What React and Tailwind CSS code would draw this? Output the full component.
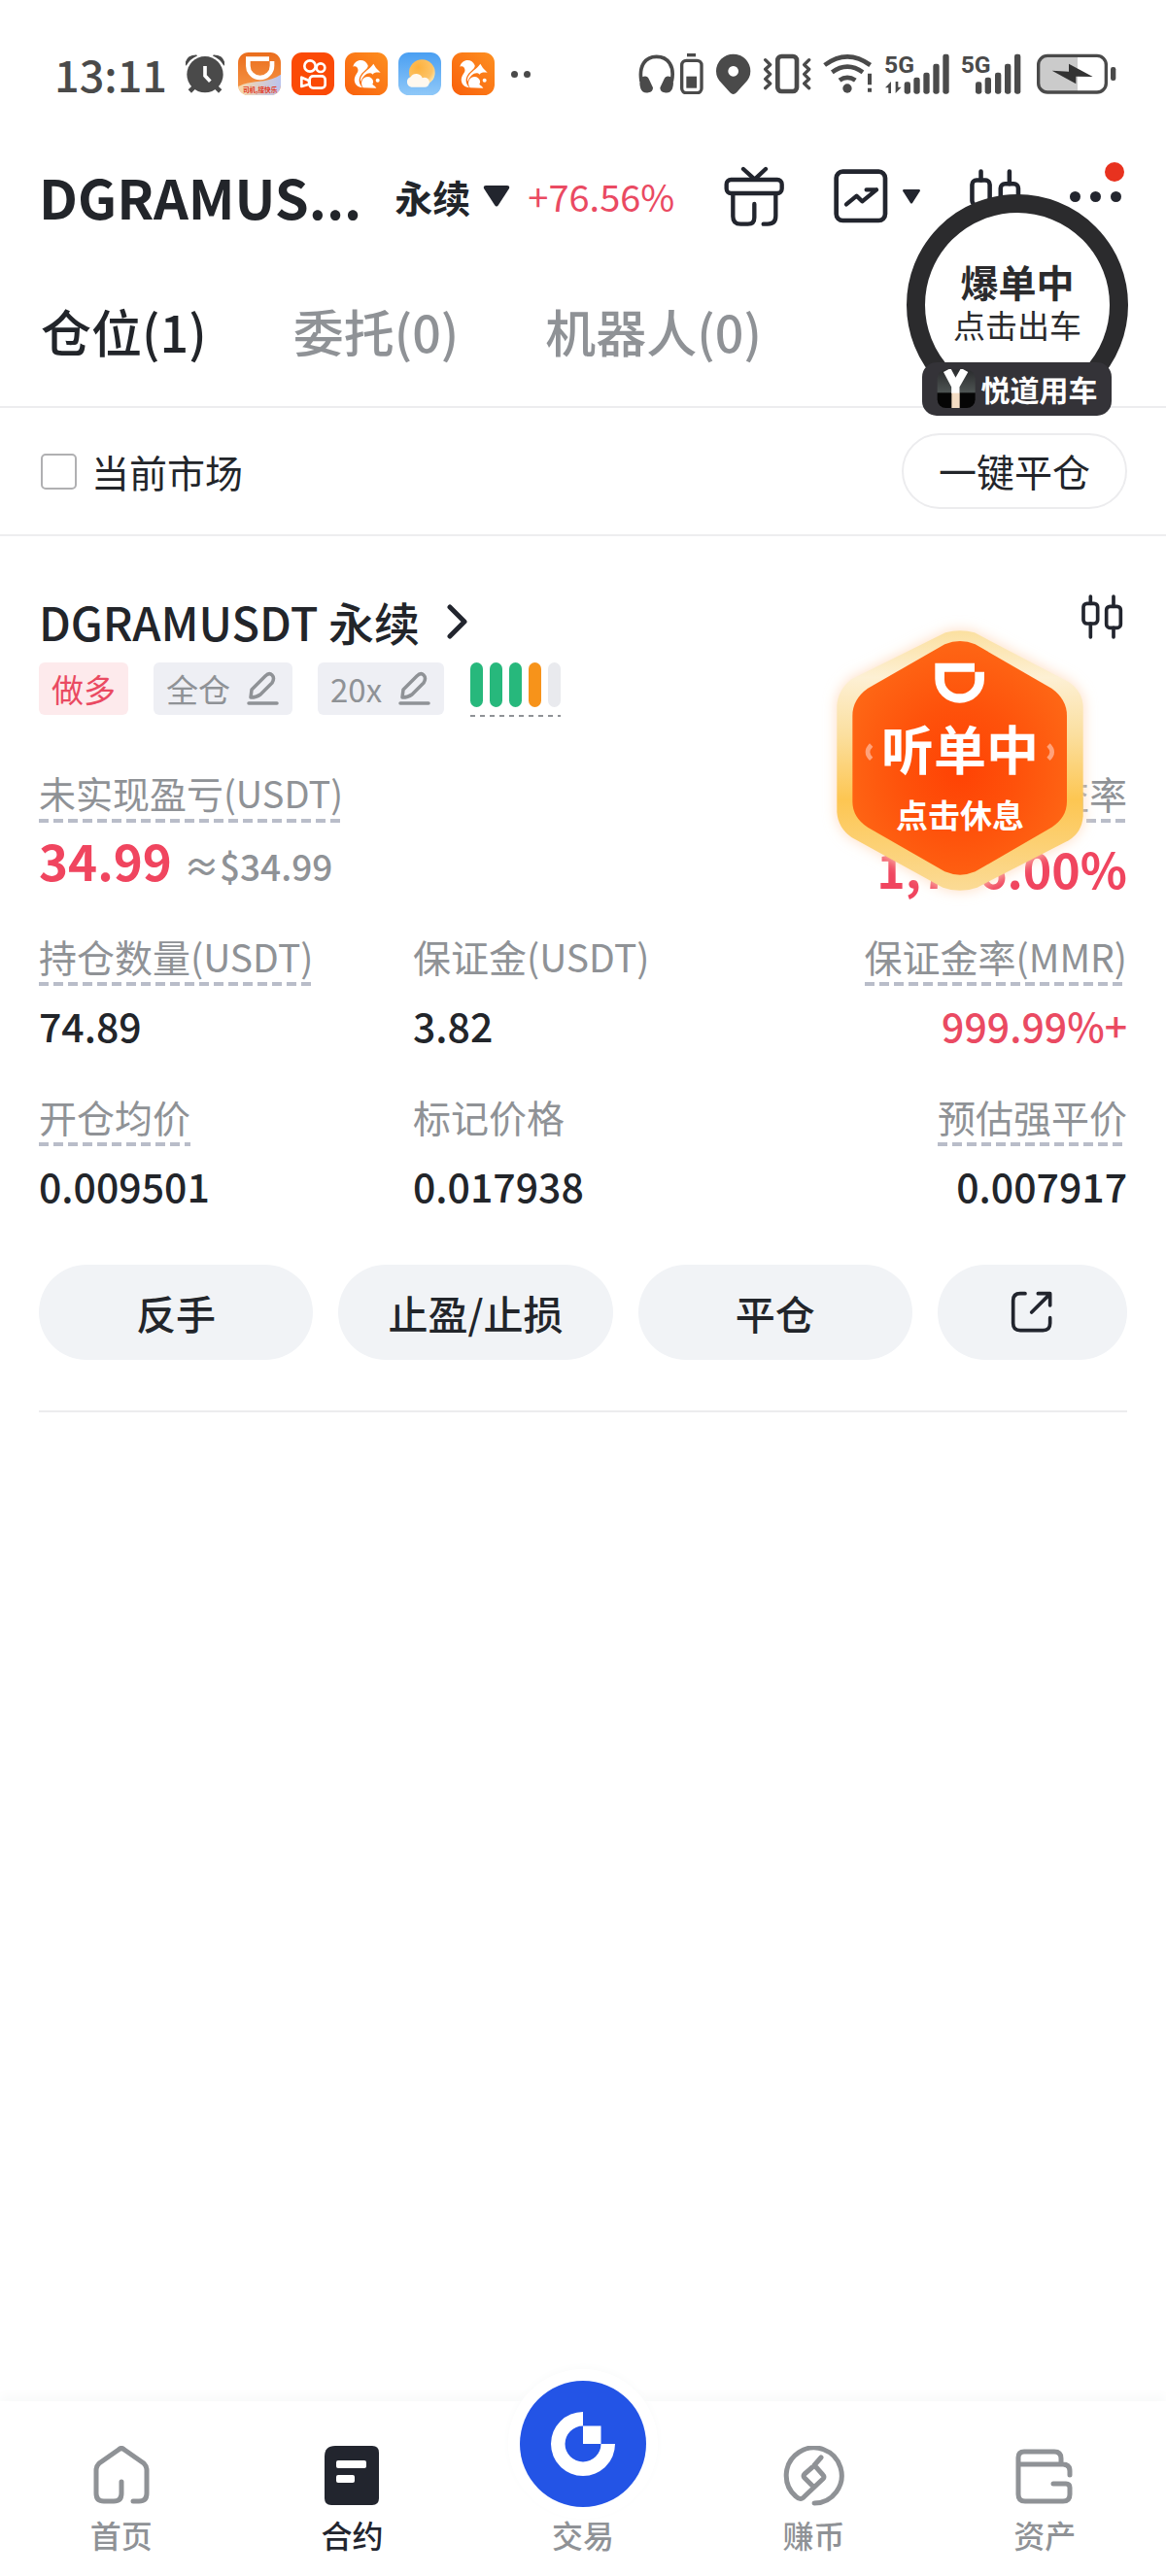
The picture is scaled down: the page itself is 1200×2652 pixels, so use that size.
import { useState } from 'react';

const stats = [
  { label: '持仓数量(USDT)', value: '74.89', hint: true },
  { label: '保证金(USDT)', value: '3.82' },
  { label: '保证金率(MMR)', value: '999.99%+', hint: true, right: true, red: true },
  { label: '开仓均价', value: '0.009501', hint: true },
  { label: '标记价格', value: '0.017938' },
  { label: '预估强平价', value: '0.007917', hint: true, right: true },
];

const tabs = ['仓位(1)', '委托(0)', '机器人(0)'];

/* ---------- status bar icons ---------- */

function AlarmIcon() {
  return (
    <svg className="w-[40px] h-[40px]" viewBox="455 50 120 120" fill="#4a4a4a">
      <circle cx="515" cy="112" r="56" />
      <path d="M456 82 q2-28 32-28 q-20 8-32 28z M574 82 q-2-28-32-28 q20 8 32 28z" stroke="#4a4a4a" strokeWidth="5" strokeLinejoin="round" />
      <path d="M482 150 l-14 14 M548 150 l14 14" stroke="#4a4a4a" strokeWidth="14" />
      <path d="M515 86 v30 l16 17" fill="none" stroke="#fff" strokeWidth="11" />
    </svg>
  );
}

function DidiAppIcon() {
  return (
    <svg className="w-[44px] h-[44px]" viewBox="0 0 132 132">
      <defs>
        <linearGradient id="didiBg" x1="0" y1="0" x2="0" y2="1">
          <stop offset="0" stopColor="#ea6d1c" />
          <stop offset="1" stopColor="#f79a4c" />
        </linearGradient>
        <linearGradient id="didiWave" x1="0" y1="0" x2="1" y2="0">
          <stop offset="0" stopColor="#fbd9a8" />
          <stop offset="1" stopColor="#b9c3ee" />
        </linearGradient>
        <clipPath id="didiClip"><rect width="132" height="132" rx="32" /></clipPath>
      </defs>
      <g clipPath="url(#didiClip)">
        <rect width="132" height="132" fill="url(#didiBg)" />
        <path d="M0 106 C40 82 90 98 132 68 V132 H0z" fill="url(#didiWave)" />
        <path d="M24 13 h72 v14 h16 v14 a44 44 0 0 1 -88 0z M38 27 v14 a30 30 0 0 0 60 0 v-14z" fill="#fff" fillRule="evenodd" />
        <text x="68" y="123" textAnchor="middle" fontSize="20" fontWeight="700" fill="#e33a22">司机,接快乐</text>
      </g>
    </svg>
  );
}

function KuaishouIcon() {
  return (
    <svg className="w-[44px] h-[44px]" viewBox="0 0 132 132">
      <rect width="132" height="132" rx="32" fill="#fb4a06" />
      <g fill="none" stroke="#fff" strokeWidth="8" strokeLinejoin="round">
        <circle cx="57" cy="42" r="17" />
        <circle cx="90" cy="47" r="13" />
        <rect x="56" y="73" width="48" height="37" rx="11" />
        <path d="M31 77 L54 87 V98 L31 105z" />
      </g>
    </svg>
  );
}

function SquirrelIcon({ id }) {
  return (
    <svg className="w-[44px] h-[44px]" viewBox="0 0 132 132">
      <defs>
        <linearGradient id={id} x1="1" y1="0" x2="0" y2="1">
          <stop offset="0" stopColor="#fd8f20" />
          <stop offset="1" stopColor="#f9600c" />
        </linearGradient>
      </defs>
      <rect width="132" height="132" rx="32" fill={`url(#${id})`} />
      <path d="M25 44 C30 20 62 16 71 40 C73 50 58 56 49 70 C40 84 44 98 54 109 C34 107 24 90 32 73 C37 63 42 60 40 52 C38 43 32 41 25 44z" fill="#fff" />
      <path d="M52 72 C60 58 76 52 88 35 L96 48 L110 62 C98 61 90 61 86 68 C80 62 70 62 62 70 C56 76 52 82 49 90 C47 84 48 78 52 72z" fill="#fff" />
      <path d="M56 109 C50 100 50 92 54 84 C62 70 84 72 87 88 C88 94 86 96 85 98 C89 102 94 104 97 110z" fill="#fff" />
      <circle cx="101" cy="86" r="6" fill="#fff" />
    </svg>
  );
}

function WeatherIcon() {
  return (
    <svg className="w-[44px] h-[44px]" viewBox="0 0 132 132">
      <defs>
        <linearGradient id="sky" x1="0" y1="0" x2="0" y2="1">
          <stop offset="0" stopColor="#4a9ff2" />
          <stop offset="1" stopColor="#8fc8f8" />
        </linearGradient>
        <radialGradient id="sun" cx=".35" cy=".3" r=".8">
          <stop offset="0" stopColor="#fdb13c" />
          <stop offset=".7" stopColor="#fcc468" />
          <stop offset="1" stopColor="#fff0c2" />
        </radialGradient>
      </defs>
      <rect width="132" height="132" rx="32" fill="url(#sky)" />
      <circle cx="73" cy="62" r="40" fill="url(#sun)" />
      <path d="M40 107 a16 16 0 0 1 -2-31 a20 20 0 0 1 36 3 a15 15 0 1 1 4 28z" fill="#fff8ee" />
    </svg>
  );
}

function Signal({ data }) {
  return (
    <svg className={data ? 'w-[67px] h-[42px] ml-3 overflow-visible' : 'w-[62px] h-[42px] ml-3 overflow-visible'} viewBox={data ? '810 46 201 126' : '1048 46 186 126'} fill="#4a4a4a">
      <text x={data ? 810 : 1047} y="107" fontSize="74" fontWeight="700" fontFamily="Roboto, sans-serif">5G</text>
      {data && <path d="M813 152 l18-19 v36 h-8 v-17z M863 150 l-18 19 v-36 h8 v17z" />}
      {(data ? [872, 901, 931, 961, 991] : [1093, 1122, 1153, 1183, 1213]).map((x, i) => (
        <rect key={x} x={x} y={[134, 120, 105, 78, 48][i]} width="19" height={[37, 51, 66, 93, 123][i]} rx="7" />
      ))}
    </svg>
  );
}

function StatusBar() {
  return (
    <div className="h-[152px] pl-14 pr-[51px] flex items-center justify-between text-[#4a4a4a]">
      <div className="flex items-center gap-[11px]">
        <span className="text-[45px] leading-[50px] font-medium mr-2">13:11</span>
        <AlarmIcon />
        <span className="ml-[3px]"><DidiAppIcon /></span>
        <KuaishouIcon />
        <SquirrelIcon id="sq1" />
        <WeatherIcon />
        <SquirrelIcon id="sq2" />
        <span className="flex gap-[6px] ml-[6px]">
          <i className="size-[7px] rounded-full bg-[#4a4a4a]" />
          <i className="size-[7px] rounded-full bg-[#4a4a4a]" />
        </span>
      </div>
      <div className="flex items-center">
        <svg className="w-[68px] h-[42px]" viewBox="45 46 204 126" fill="none" stroke="#4a4a4a">
          <path d="M54 132 C46 84 66 56 101 56 C136 56 158 84 148 132" strokeWidth="11" />
          <path d="M58 118 q14-6 20 8 l12 26 q0 14-14 15 q-18 3-24-12 q-8-26 6-37z M144 118 q-14-6-20 8 l-12 26 q0 14 14 15 q18 3 24-12 q8-26-6-37z" fill="#4a4a4a" stroke="none" />
          <rect x="179" y="68" width="61" height="100" rx="14" strokeWidth="10" />
          <path d="M195 51 h27" strokeWidth="10" />
          <rect x="193" y="117" width="32" height="36" fill="#4a4a4a" stroke="none" />
        </svg>
        <svg className="w-[36px] h-[42px] ml-3" viewBox="286 46 108 126" fill="#4a4a4a">
          <path d="M339 48 a53 53 0 0 1 53 53 q0 22-18 38 l-25 28 q-10 10-20 0 l-25-28 q-18-16-18-38 a53 53 0 0 1 53-53z M339 85 a16 16 0 1 0 .1 0z" fillRule="evenodd" />
        </svg>
        <svg className="w-[50px] h-[42px] ml-3" viewBox="430 46 150 126" fill="none" stroke="#4a4a4a" strokeLinejoin="round" strokeLinecap="round">
          <rect x="476" y="55" width="59" height="108" rx="12" strokeWidth="14" />
          <path d="M438 66 l15 15 l-15 14 l15 15 l-15 15 l15 14 l-15 14 M573 66 l-15 15 l15 14 l-15 15 l15 15 l-15 14 l15 14" strokeWidth="10" />
        </svg>
        <svg className="w-[51px] h-[42px] ml-3" viewBox="622 46 153 126" fill="none" stroke="#4a4a4a" strokeWidth="14">
          <path d="M627 82 Q697 30 768 82 M650 104 Q697 70 745 104 M673 129 Q697 112 722 129" />
          <circle cx="697" cy="154" r="14" fill="#4a4a4a" stroke="none" />
          <path d="M766 108 v35 M766 153 v12" strokeWidth="12" />
        </svg>
        <Signal data />
        <Signal />
        <svg className="w-[82px] h-[42px] ml-4" viewBox="1281 46 246 126">
          <path d="M1310 54 H1407 V166 H1310 q-24 0-24-24 V78 q0-24 24-24z" fill="#cbcbcb" />
          <rect x="1286" y="53" width="209" height="113" rx="28" fill="none" stroke="#4a4a4a" strokeWidth="10" />
          <path d="M1328 99 L1380 102 V78 L1454 118 L1402 117 V140z" fill="#333" />
          <rect x="1509" y="88" width="16" height="42" rx="7" fill="#4a4a4a" />
        </svg>
      </div>
    </div>
  );
}

/* ---------- app icons ---------- */

const line = { fill: 'none', stroke: '#22252e', strokeLinecap: 'round', strokeLinejoin: 'round' };

function GiftIcon() {
  return (
    <svg className="w-[62px] h-[62px]" viewBox="133 60 186 186" {...line} strokeWidth="13">
      <path d="M193 69 L228 101 L262 69" />
      <rect x="141" y="102" width="171" height="42" rx="14" />
      <path d="M161 148 V215 q0 24 24 24 h22 q20 0 20-20 V177 M255 239 h13 q25 0 25-25 V148" />
    </svg>
  );
}

function ChartIcon() {
  return (
    <svg className="w-[56px] h-[56px]" viewBox="470 71 168 168" {...line} strokeWidth="14">
      <rect x="478" y="79" width="151" height="151" rx="20" />
      <path d="M509 180 L541 154 L558 171 L602 135 M571 135 h31" strokeWidth="13" />
    </svg>
  );
}

function CandlesIcon({ className }) {
  return (
    <svg className={className} viewBox="880 94 130 138" {...line} strokeWidth="11">
      <rect x="888" y="122" width="44" height="62" rx="11" />
      <rect x="959" y="131" width="44" height="66" rx="11" />
      <path d="M910 100 V122 M910 184 V226 M981 100 V131 M981 197 V226" />
    </svg>
  );
}

function PenIcon() {
  return (
    <svg className="w-[34px] h-[36px]" viewBox="0 0 34 36" fill="none" stroke="#8f9296" strokeWidth="3.5" strokeLinecap="round" strokeLinejoin="round">
      <path d="M2 33 h29 M4 27 L5 19 L19 5 q4-4 7-1 q3 3 0 8 L14 24 q-4 3-10 3z" />
    </svg>
  );
}

function ShareIcon() {
  return (
    <svg className="w-[44px] h-[44px]" viewBox="724 1164 132 132" {...line} strokeWidth="11">
      <path d="M769 1172 h-15 q-22 0-22 22 v70 q0 22 22 22 h70 q22 0 22-22 v-17 M789 1230 L845 1174 M809 1172 h37 v37" />
    </svg>
  );
}

/* ---------- bottom nav icons ---------- */

const gray = { fill: 'none', stroke: '#8f9296', strokeWidth: 5, strokeLinecap: 'round', strokeLinejoin: 'round' };

function HomeIcon() {
  return (
    <svg className="w-[58px] h-[62px]" viewBox="0 0 58 62" {...gray}>
      <path d="M41 57 h6 q8 0 8-8 V25 q0-4-3-7 L32 4 q-3-3-6 0 L6 18 q-3 3-3 7 V49 q0 8 8 8 h10 q8 0 8-8 V37" />
    </svg>
  );
}

function ContractIcon() {
  return (
    <svg className="w-[56px] h-[62px]" viewBox="0 0 56 62">
      <path d="M11 0 H49 q7 0 7 7 V54 q0 7-7 7 H7 q-7 0-7-7 V11 Q0 0 11 0z" fill="#22252e" />
      <rect x="12" y="15" width="31" height="8" rx="2" fill="#fff" />
      <rect x="12" y="30" width="19" height="8" rx="2" fill="#fff" />
    </svg>
  );
}

function EarnIcon() {
  return (
    <svg className="w-[64px] h-[62px]" viewBox="0 0 64 62" {...gray}>
      <path d="M32 59 A28.5 28.5 0 1 0 13 52 q5 5 9 0 L41 34 q2-2 0-4 L34 22 q-2-2-4 0 L22 29 q-2 2 0 4 L31 42 M32 20 L39 12" />
    </svg>
  );
}

function WalletIcon() {
  return (
    <svg className="w-[60px] h-[62px]" viewBox="0 -3 60 62" {...gray}>
      <path d="M3 16 V9 q0-6 6-6 h31 q7 0 7 7 v6 M3 16 h46 q7 0 7 7 v4 M3 16 v31 q0 7 7 7 h39 q7 0 7-7 v-7 q0-4-4-4 h-13" />
    </svg>
  );
}

function TradeLogo() {
  return (
    <span className="absolute left-1/2 -translate-x-1/2 -top-[21px] size-[130px] rounded-full bg-[#2354e6] shadow-[0_0_0_12px_#fff,0_-2px_8px_12px_#fafbfb]">
      <svg className="size-full" viewBox="-65 -65 130 130">
        <path d="M0 -33 A33 33 0 1 0 33 0 H18.500 A18.500 18.500 0 1 1 0 -18.500z" fill="#fff" />
        <rect x="0" y="-18.500" width="18.500" height="18.500" fill="#fff" />
      </svg>
    </span>
  );
}

function NavItem({ label, icon, active }) {
  return (
    <a href="#" className={`relative flex flex-1 flex-col items-center pt-[46px] text-[32px] leading-[40px] font-medium ${active ? 'text-[#22252e]' : 'text-[#8f9296]'}`}>
      <span className="h-[62px] mb-[9px]">{icon}</span>
      {label}
    </a>
  );
}

/* label with an optional dashed underline */
function Label({ children, hint, size = 'text-[39px]' }) {
  return (
    <div className={`inline-block leading-[40px] text-[#8f9296] ${size}`}>
      {children}
      <div className={`mt-[7px] h-1 ${hint ? 'bg-[repeating-linear-gradient(90deg,#b9bdc9_0_10px,transparent_10px_15px)]' : ''}`} />
    </div>
  );
}

/* ---------- floating widgets from other apps ---------- */

function RideWidget() {
  return (
    <button className="absolute right-[39px] top-[200px] w-[228px] h-[228px] text-[#2b2b2d]">
      <span className="absolute inset-0 rounded-full border-[19px] border-[#2b2b2d] bg-white" />
      <span className="relative flex h-full flex-col items-center pt-[66px]">
        <b className="text-[39px] leading-[46px]">爆单中</b>
        <span className="text-[33px] leading-[44px]">点击出车</span>
      </span>
      <span className="absolute bottom-0 left-4 w-[195px] h-[55px] pb-[2px] rounded-[15px] bg-[#343338] flex items-center justify-center gap-[6px] text-white text-[30px] leading-[40px] font-bold">
        <svg className="w-[40px] h-[40px]" viewBox="790 690 120 120">
          <defs>
            <linearGradient id="yBg" x1="0" y1="0" x2="0" y2="1">
              <stop offset="0" stopColor="#2b2c2e" />
              <stop offset=".58" stopColor="#4d5352" />
              <stop offset=".62" stopColor="#050505" />
              <stop offset="1" stopColor="#050505" />
            </linearGradient>
          </defs>
          <rect x="792" y="692" width="117" height="118" rx="26" fill="url(#yBg)" />
          <path d="M822 693 L848 742 L876 693 M848 735 V765" fill="none" stroke="#fff" strokeWidth="25" />
          <rect x="836" y="764" width="25" height="46" fill="#f3dcc4" />
        </svg>
        悦道用车
      </span>
    </button>
  );
}

function DidiWidget() {
  return (
    <button className="absolute right-[62px] top-[626px] w-[300px] h-[314px] text-white">
      <svg className="absolute inset-0 size-full" viewBox="57 138 900 942">
        <defs>
          <linearGradient id="rim" x1="0" y1="0" x2="0" y2="1">
            <stop offset="0" stopColor="#fbe0a0" />
            <stop offset=".18" stopColor="#fdf0d4" />
            <stop offset=".4" stopColor="#fbdf9f" />
            <stop offset=".65" stopColor="#fdc652" />
            <stop offset="1" stopColor="#fbdb96" />
          </linearGradient>
          <radialGradient id="core" cx=".5" cy=".55" r=".55">
            <stop offset="0" stopColor="#ff4204" />
            <stop offset=".5" stopColor="#fe520b" />
            <stop offset="1" stopColor="#fe6615" />
          </radialGradient>
          <filter id="glow" x="-20%" y="-20%" width="140%" height="140%">
            <feGaussianBlur stdDeviation="20" />
          </filter>
        </defs>
        <path d="M462 214 Q507 202 552 214 L842 366 Q887 396 887 446 V780 Q884 830 842 856 L560 1001 Q507 1020 454 1001 L172 846 Q130 816 127 768 V440 Q130 390 172 358z" fill="#ffdcc0" filter="url(#glow)" />
        <path d="M462 214 Q507 202 552 214 L842 366 Q887 396 887 446 V780 Q884 830 842 856 L560 1001 Q507 1020 454 1001 L172 846 Q130 816 127 768 V440 Q130 390 172 358z" fill="url(#rim)" />
        <path d="M460 250 Q507 230 554 250 L790 386 Q837 420 837 470 V735 Q837 785 790 815 L554 952 Q507 972 460 952 L222 815 Q175 785 175 735 V470 Q175 420 222 386z" fill="url(#core)" />
        <path d="M430 308 H552 V335 H582 V357 A76 74 0 0 1 430 357z M459 335 V360 A47 43 0 0 0 553 360 V335z" fill="#fff" fillRule="evenodd" />
        <path d="M233 561 q-22 22 0 43 M780 561 q22 22 0 43" fill="none" stroke="#ffa27a" strokeWidth="14" />
      </svg>
      <span className="relative flex h-full flex-col items-center pt-[112px]">
        <b className="text-[54px] leading-[64px]">听单中</b>
        <b className="mt-3 text-[33px] leading-[48px]">点击休息</b>
      </span>
    </button>
  );
}

export default function App() {
  const [tab, setTab] = useState(0);
  const [onlyCurrent, setOnlyCurrent] = useState(false);

  return (
    <div className="relative min-h-screen flex flex-col bg-white text-[#22252a] font-['Noto_Sans_CJK_SC',sans-serif]">
      <StatusBar />

      <header className="h-[100px] pl-10 pr-[46px] flex items-center">
        <h1 className="text-[56px] leading-[64px] font-bold">DGRAMUS...</h1>
        <button className="ml-[34px] flex items-center gap-[13px] text-[39px] leading-[48px] font-bold">
          永续
          <svg className="w-[28px] h-[24px]" viewBox="0 0 28 24" fill="#22252e"><path d="M3 1 H25 q3 0 2 3 L16 21 q-2 3-4 0 L1 4 Q0 1 3 1z" /></svg>
        </button>
        <span className="ml-[18px] text-[38px] leading-[48px] text-[#ea4a62]">+76.56%</span>
        <div className="ml-auto flex items-center">
          <button aria-label="gift"><GiftIcon /></button>
          <button aria-label="chart" className="ml-[51px] flex items-center gap-[15px]">
            <ChartIcon />
            <svg className="w-[18px] h-[15px]" viewBox="0 0 18 15" fill="#22252e"><path d="M1 0 H17 q2 1 0 3 L10 14 q-1 1-2 0 L1 3 Q-1 1 1 0z" /></svg>
          </button>
          <button aria-label="candles" className="ml-[50px]"><CandlesIcon className="w-[54px] h-[57px]" /></button>
          <button aria-label="more" className="relative ml-[50px] h-[57px] flex items-center gap-[10px]">
            <i className="size-[11px] rounded-full bg-[#22252e]" />
            <i className="size-[11px] rounded-full bg-[#22252e]" />
            <i className="size-[11px] rounded-full bg-[#22252e]" />
            <i className="absolute -top-[7px] -right-[3px] size-[20px] rounded-full bg-[#e8321f]" />
          </button>
        </div>
      </header>

      <nav className="h-[168px] px-[42px] pt-3 flex items-center gap-[89px] border-b-2 border-[#ededef] text-[52px] leading-[60px] font-medium">
        {tabs.map((t, i) => (
          <button key={t} onClick={() => setTab(i)} className={tab === i ? 'text-[#22252a]' : 'text-[#8f9296]'}>{t}</button>
        ))}
      </nav>

      <div className="h-[132px] pl-[42px] pr-10 flex items-center justify-between border-b-2 border-[#ededef] text-[39px] leading-[48px]">
        <label className="flex items-center gap-[15px]">
          <input
            type="checkbox"
            checked={onlyCurrent}
            onChange={e => setOnlyCurrent(e.target.checked)}
            className="appearance-none size-[37px] rounded-[5px] border-2 border-[#b0b0b2] checked:bg-[#22252e]" />
          当前市场
        </label>
        <button className="h-[78px] px-[36px] pb-[2px] rounded-full border-2 border-[#ececee]">一键平仓</button>
      </div>

      <main className="px-10">
        <div className="pt-[60px] flex items-start justify-between">
          <a href="#" className="flex items-center text-[47px] leading-[56px] font-medium">
            DGRAMUSDT 永续
            <svg className="ml-7 w-[22px] h-[38px]" viewBox="0 0 22 38" {...line} strokeWidth="5"><path d="M3 4 L18 19 L3 34" /></svg>
          </a>
          <button aria-label="candles" className="mr-1"><CandlesIcon className="w-[44px] h-[46px]" /></button>
        </div>

        <div className="mt-[14px] flex items-start text-[33px] leading-[54px] text-[#8f9296]">
          <span className="px-[13px] rounded-md bg-[#fdeaec] text-[#ea4a62]">做多</span>
          <button className="ml-[26px] px-[13px] rounded-md bg-[#eeeff4] flex items-center gap-[17px]">全仓 <PenIcon /></button>
          <button className="ml-[26px] px-[13px] rounded-md bg-[#eeeff4] flex items-center gap-[17px]">20x <PenIcon /></button>
          <div className="ml-[27px]">
            <div className="flex gap-[7px]">
              <i className="w-[13px] h-[46px] rounded-full bg-[#27b87c]" />
              <i className="w-[13px] h-[46px] rounded-full bg-[#27b87c]" />
              <i className="w-[13px] h-[46px] rounded-full bg-[#27b87c]" />
              <i className="w-[13px] h-[46px] rounded-full bg-[#f7931a]" />
              <i className="w-[13px] h-[46px] rounded-full bg-[#e9eaee]" />
            </div>
            <div className="mt-2 h-[2px] bg-[repeating-linear-gradient(90deg,#8f9296_0_5px,transparent_5px_10px)]" />
          </div>
        </div>

        <div className="mt-[58px] flex justify-between">
          <div>
            <Label hint size="text-[38px]">未实现盈亏(USDT)</Label>
            <div className="mt-2 flex items-baseline gap-3 leading-[60px]">
              <span className="text-[51px] leading-[60px] font-bold text-[#f0455f]">34.99</span>
              <span className="text-[37px] font-medium text-[#8f9296]">≈$34.99</span>
            </div>
          </div>
          <div className="text-right">
            <Label hint>收益率</Label>
            <div className="mt-4 text-[50px] leading-[60px] font-bold text-[#f0455f]">1,776.00%</div>
          </div>
        </div>

        <div className="mt-[41px] grid grid-cols-[11fr_10fr_11fr] gap-y-[50px]">
          {stats.map(s => (
            <div key={s.label} className={s.right ? 'text-right' : ''}>
              <Label hint={s.hint}>{s.label}</Label>
              <div className={`mt-4 text-[41px] leading-[48px] font-medium ${s.red ? 'text-[#ea4a62]' : ''}`}>{s.value}</div>
            </div>
          ))}
        </div>

        <div className="mt-[58px] flex gap-[26px] text-[41px] leading-[98px] font-medium">
          {['反手', '止盈/止损', '平仓'].map(t => (
            <button key={t} className="flex-[282] rounded-full bg-[#f1f3f6]">{t}</button>
          ))}
          <button aria-label="share" className="flex-[195] rounded-full bg-[#f1f3f6] flex items-center justify-center"><ShareIcon /></button>
        </div>
        <hr className="mt-[52px] border-t-2 border-[#ececee]" />
      </main>

      <footer className="mt-auto h-[180px] px-[6px] flex bg-white shadow-[0_-6px_10px_#f9fafa]">
        <NavItem label="首页" icon={<HomeIcon />} />
        <NavItem label="合约" icon={<ContractIcon />} active />
        <NavItem label="交易" icon={<TradeLogo />} />
        <NavItem label="赚币" icon={<EarnIcon />} />
        <NavItem label="资产" icon={<WalletIcon />} />
      </footer>

      <RideWidget />
      <DidiWidget />
    </div>
  );
}
